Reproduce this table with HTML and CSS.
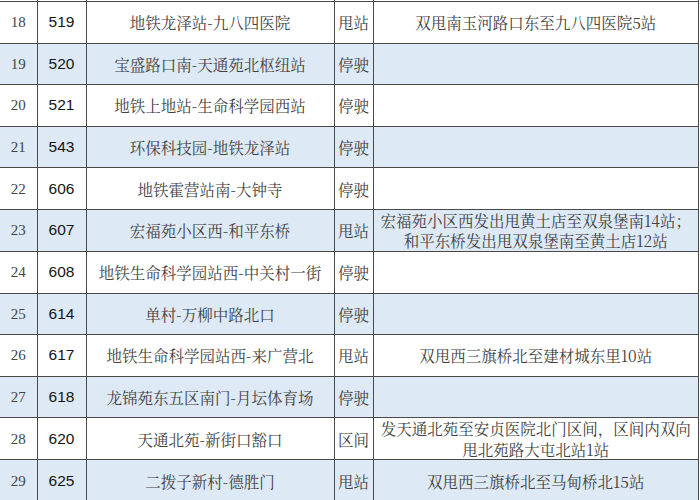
FILE: index.html
```html
<!DOCTYPE html>
<html lang="zh">
<head>
<meta charset="utf-8">
<link rel="stylesheet" href="styles.css">
</head>
<body>
<table class="routes">
<colgroup>
<col class="c-idx"><col class="c-num"><col class="c-name"><col class="c-st"><col>
</colgroup>
<tbody>
<tr class="spacer"><td></td><td></td><td></td><td></td><td></td></tr>
<tr><td class="idx">18</td><td class="num">519</td><td>地铁龙泽站-九八四医院</td><td>甩站</td><td>双甩南玉河路口东至九八四医院5站</td></tr>
<tr class="alt"><td class="idx">19</td><td class="num">520</td><td>宝盛路口南-天通苑北枢纽站</td><td>停驶</td><td></td></tr>
<tr><td class="idx">20</td><td class="num">521</td><td>地铁上地站-生命科学园西站</td><td>停驶</td><td></td></tr>
<tr class="alt"><td class="idx">21</td><td class="num">543</td><td>环保科技园-地铁龙泽站</td><td>停驶</td><td></td></tr>
<tr><td class="idx">22</td><td class="num">606</td><td>地铁霍营站南-大钟寺</td><td>停驶</td><td></td></tr>
<tr class="alt"><td class="idx">23</td><td class="num">607</td><td>宏福苑小区西-和平东桥</td><td>甩站</td><td class="two">宏福苑小区西发出甩黄土店至双泉堡南14站；<br>和平东桥发出甩双泉堡南至黄土店12站</td></tr>
<tr><td class="idx">24</td><td class="num">608</td><td>地铁生命科学园站西-中关村一街</td><td>停驶</td><td></td></tr>
<tr class="alt"><td class="idx">25</td><td class="num">614</td><td>单村-万柳中路北口</td><td>停驶</td><td></td></tr>
<tr><td class="idx">26</td><td class="num">617</td><td>地铁生命科学园站西-来广营北</td><td>甩站</td><td>双甩西三旗桥北至建材城东里10站</td></tr>
<tr class="alt"><td class="idx">27</td><td class="num">618</td><td>龙锦苑东五区南门-月坛体育场</td><td>停驶</td><td></td></tr>
<tr><td class="idx">28</td><td class="num">620</td><td>天通北苑-新街口豁口</td><td>区间</td><td class="two">发天通北苑至安贞医院北门区间，区间内双向<br>甩北苑路大屯北站1站</td></tr>
<tr class="alt"><td class="idx">29</td><td class="num">625</td><td>二拨子新村-德胜门</td><td>甩站</td><td>双甩西三旗桥北至马甸桥北15站</td></tr>
</tbody>
</table>
</body>
</html>
```

FILE: styles.css
```css
html, body {
  margin: 0;
  padding: 0;
  background: #ffffff;
  overflow: hidden;
}

.routes {
  border-collapse: collapse;
  table-layout: fixed;
  width: 699px;
  font-family: "Noto Serif CJK SC", "Liberation Serif", "Noto Sans CJK SC", serif;
  font-size: 15.5px;
  color: #424242;
}

.c-idx { width: 37px; }
.c-num { width: 49px; }
.c-name { width: 248px; }
.c-st { width: 39px; }

.routes td {
  border: 1px solid #4a4a4a;
  height: 40.6px;
  padding: 0;
  text-align: center;
  vertical-align: middle;
  line-height: 20px;
  white-space: nowrap;
  overflow: hidden;
}

.routes tr td:first-child {
  border-left: none;
}

.routes tr.spacer td {
  height: 1px;
  border-top: none;
  line-height: 0;
  font-size: 0;
}

.routes tr.alt td {
  background: #dde9f5;
}

.routes td.idx {
  font-family: "Liberation Serif", serif;
  font-size: 15px;
  color: #444444;
}

.routes td.num {
  font-family: "Liberation Sans", Arial, sans-serif;
  font-size: 15.5px;
  color: #151515;
}

.routes td.two {
  line-height: 20.5px;
}
```
